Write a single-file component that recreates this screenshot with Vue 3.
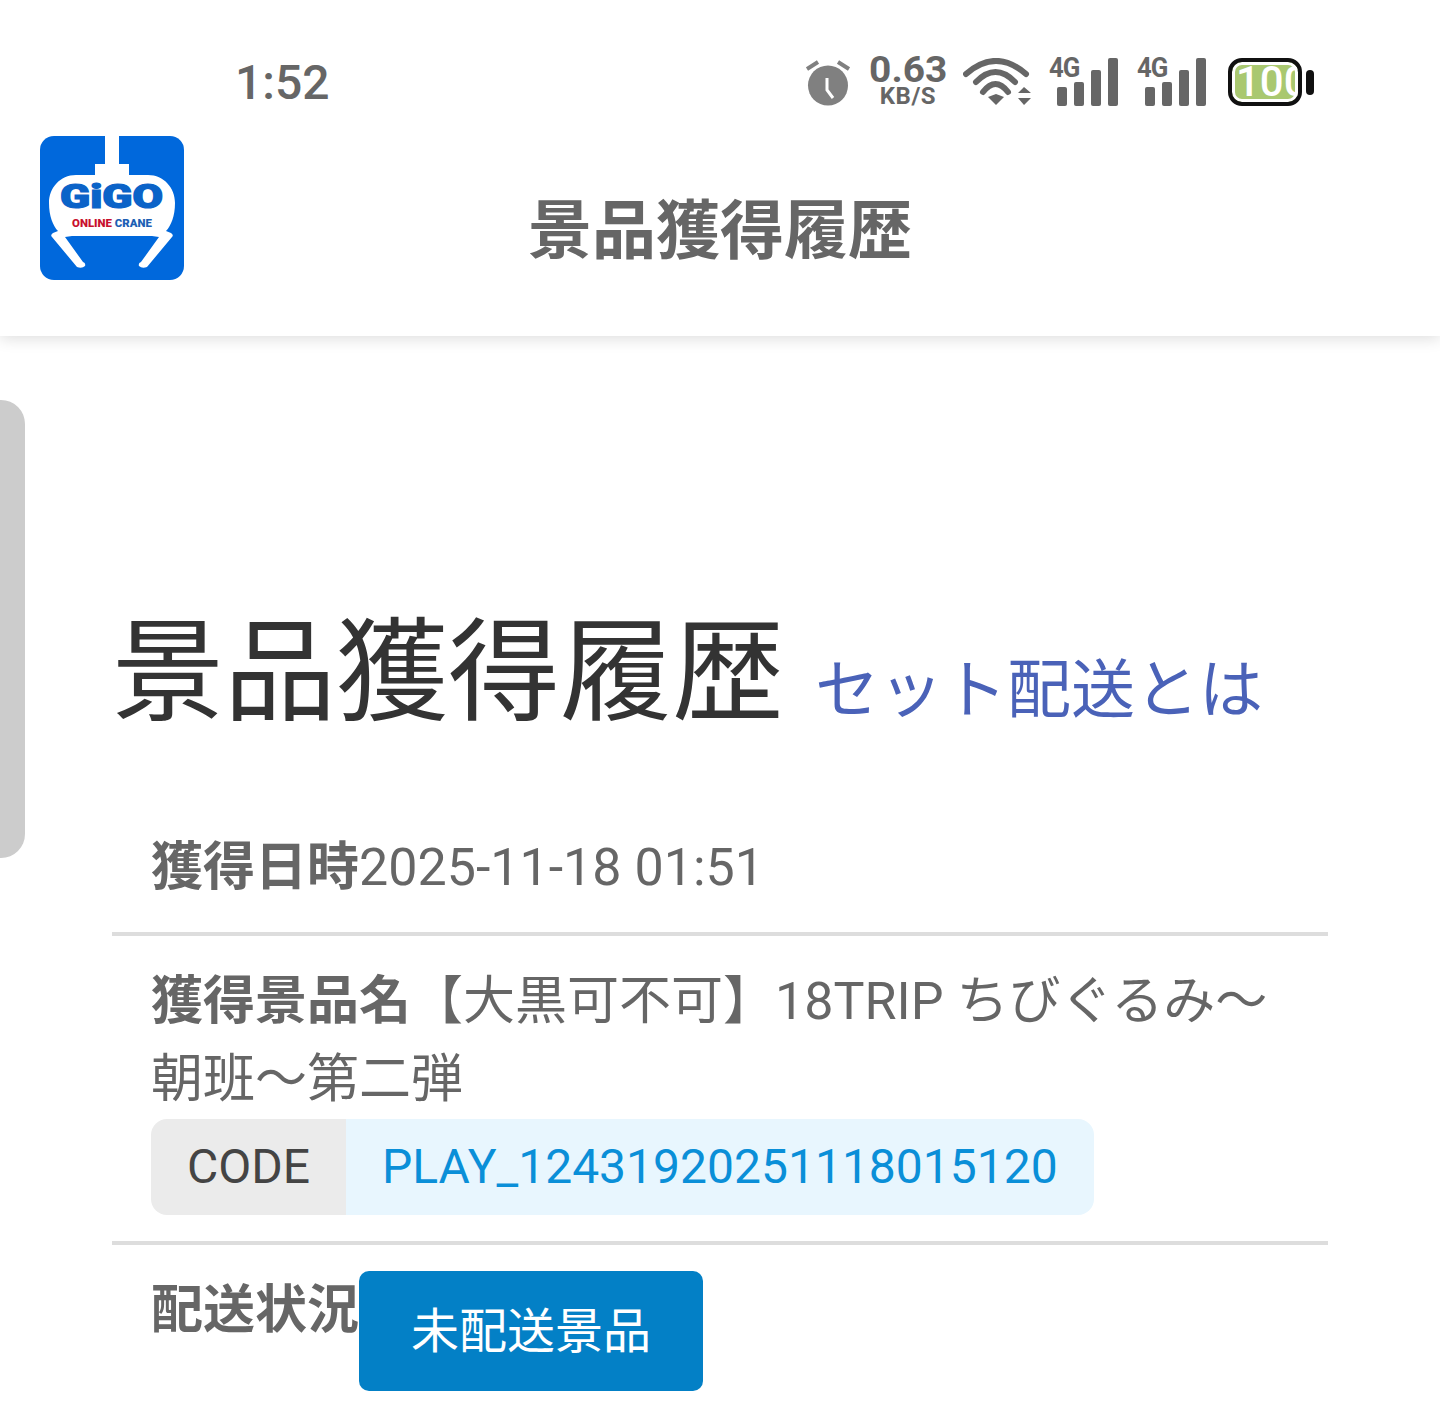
<template>
  <div class="page">
    <!-- status bar -->
    <div class="status">
      <div class="time">1:52</div>
      <div class="status-icons">
        <svg class="ic-alarm" viewBox="0 0 46 50" width="46" height="50">
          <circle cx="22" cy="28.5" r="20" fill="#808080" />
          <path d="M21 21V33L27 41" fill="none" stroke="#fff" stroke-width="3" />
          <path d="M1 12L12 5M32 5L43 12" stroke="#808080" stroke-width="4" fill="none" />
        </svg>
        <div class="speed">
          <span class="speed-num">0.63</span>
          <span class="speed-unit">KB/S</span>
        </div>
        <svg class="ic-wifi" viewBox="0 0 70 50" width="70" height="50">
          <path d="M3 16Q33 -10 63 16" fill="none" stroke="#666" stroke-width="6" stroke-linecap="round" />
          <path d="M13 24Q32.5 4 52 24" fill="none" stroke="#666" stroke-width="6" stroke-linecap="round" />
          <path d="M20 34Q32.5 18 45 34" fill="none" stroke="#666" stroke-width="6" stroke-linecap="round" />
          <path d="M25 39L33 36L41 39L33 47Z" fill="#666" />
          <path d="M55 35L61 29L68 35ZM55 40H68L61 47Z" fill="#666" />
        </svg>
        <div v-for="n in 2" :key="n" class="signal">
          <span class="sig-label">4G</span>
          <span class="bar" v-for="h in bars" :key="h" :style="{ height: h + 'px' }"></span>
        </div>
        <div class="battery">
          <div class="battery-body"><span class="battery-num">100</span></div>
          <div class="battery-tip"></div>
        </div>
      </div>
    </div>

    <!-- header -->
    <header class="head">
      <svg class="logo" viewBox="0 0 144 144" width="144" height="144">
        <rect width="144" height="144" rx="14" fill="#0068dc" />
        <path d="M65 0H79V28H89V39H108C124 39 135 52 135 67C135 80 131 90 126 95L131 97Q134 99 132 101L107 131Q102 133 99 130Q98 127 101 126L119 101L112 100H32L25 101L43 126Q46 127 45 130Q42 133 37 131L12 101Q10 99 13 97L18 95C13 90 9 80 9 67C9 52 20 39 36 39H55V28H65Z" fill="#fff" />
        <text x="20" y="72" class="logo-gigo" textLength="103" lengthAdjust="spacingAndGlyphs">GiGO</text>
        <text x="32" y="91" class="logo-small" textLength="80" lengthAdjust="spacingAndGlyphs"><tspan fill="#c8102e">ONLINE</tspan> <tspan fill="#1d5fb4">CRANE</tspan></text>
      </svg>
      <div class="head-title">景品獲得履歴</div>
    </header>

    <div class="side-tab"></div>

    <main class="content">
      <div class="title-row">
        <h1 class="title">景品獲得履歴</h1>
        <a class="link">セット配送とは</a>
      </div>

      <div class="row row-date">
        <span class="label">獲得日時</span><span class="val">2025-11-18 01:51</span>
      </div>

      <div class="row row-name">
        <div class="name-text"><span class="label">獲得景品名</span><span class="val">【大黒可不可】18TRIP ちびぐるみ〜朝班〜第二弾</span></div>
        <div class="code">
          <span class="code-key">CODE</span>
          <span class="code-val">PLAY_12431920251118015120</span>
        </div>
      </div>

      <div class="row-status">
        <span class="label">配送状況</span>
        <button class="status-btn">未配送景品</button>
      </div>
    </main>
  </div>
</template>

<script setup>
const bars = [19, 24, 36, 48]
</script>

<style>
html, body { margin: 0; background: #fff; }
</style>

<style scoped>
.page {
  width: 1440px;
  height: 1416px;
  overflow: hidden;
  position: relative;
  background: #fff;
  font-family: Roboto, "Noto Sans CJK JP", sans-serif;
}

/* status bar */
.status {
  height: 136px;
  box-sizing: border-box;
  padding: 52px 126px 0 235px;
  display: flex;
  justify-content: space-between;
  align-items: flex-start;
}
.time {
  font-size: 48px;
  font-weight: 500;
  line-height: 60px;
  margin-top: 1px;
  color: #666;
}
.status-icons {
  display: flex;
  align-items: flex-start;
}
.ic-alarm { margin: 5px 0 0 0; }
.speed {
  display: flex;
  flex-direction: column;
  align-items: center;
  margin: 2px 0 0 17px;
  width: 78px;
  color: #666;
  font-weight: 700;
}
.speed-num { font-size: 36px; line-height: 32px; transform: scaleX(1.08); }
.speed-unit { font-size: 24px; line-height: 20px; letter-spacing: 0.5px; }
.ic-wifi { margin: 6px 0 0 16px; }
.signal {
  display: flex;
  align-items: flex-end;
  gap: 7px;
  height: 48px;
  width: 68px;
  margin: 6px 0 0 17px;
  position: relative;
  justify-content: flex-end;
}
.signal + .signal { margin-left: 20px; }
.sig-label {
  position: absolute;
  left: -1px;
  top: -4px;
  font-size: 28px;
  font-weight: 700;
  color: #666;
  letter-spacing: -1px;
  line-height: 28px;
  transform: scaleX(0.92);
  transform-origin: left;
}
.bar { width: 10px; background: #666; border-radius: 2px; }
.battery {
  display: flex;
  align-items: center;
  gap: 4px;
  margin: 6px 0 0 22px;
}
.battery-body {
  width: 74px;
  height: 48px;
  box-sizing: border-box;
  border: 4px solid #111;
  border-radius: 14px;
  background: #a9c870;
  overflow: hidden;
  color: #fff;
  font-size: 42px;
  font-weight: 500;
  line-height: 40px;
  padding-left: 4px;
  box-shadow: inset 0 0 0 3px #fff;
  white-space: nowrap;
}
.battery-tip {
  width: 8px;
  height: 25px;
  background: #111;
  border-radius: 4px;
}

/* header */
.head {
  height: 200px;
  box-sizing: border-box;
  padding-left: 40px;
  position: relative;
  box-shadow: 0 3px 14px rgba(0, 0, 0, 0.13);
  clip-path: inset(0 0 -30px 0);
}
.logo { display: block; }
.logo-gigo { font: 900 33px Roboto, sans-serif; fill: #0b63c8; stroke: #0b63c8; stroke-width: 1.2; }
.logo-small { font: 900 10.5px Roboto, sans-serif; }
.head-title {
  position: absolute;
  left: 0;
  right: 0;
  top: 58px;
  text-align: center;
  font-size: 64px;
  font-weight: 700;
  line-height: 76px;
  color: #666;
}

.side-tab {
  position: absolute;
  left: 0;
  top: 400px;
  width: 25px;
  height: 458px;
  background: #ccc;
  border-radius: 0 24px 24px 0;
}

/* content */
.content {
  margin: 0 112px;
  padding-top: 274px;
}
.title-row {
  display: flex;
  align-items: baseline;
  gap: 31px;
}
.title {
  margin: 0;
  font-size: 112px;
  font-weight: 400;
  line-height: 128px;
  color: #333;
}
.link {
  font-size: 64px;
  color: #4a62b8;
}
.row {
  border-bottom: 4px solid #ddd;
  padding: 0 39px;
  font-size: 52px;
}
.label {
  font-size: 52px;
  font-weight: 700;
  color: #666;
}
.val {
  font-size: 52px;
  color: #666;
}
.row-date {
  margin-top: 66px;
  height: 128px;
  line-height: 128px;
}
.row-name {
  padding-top: 27px;
  padding-bottom: 26px;
}
.name-text { line-height: 78px; }
.code {
  display: flex;
  width: fit-content;
  height: 96px;
  border-radius: 16px;
  overflow: hidden;
  font-size: 48px;
  line-height: 96px;
}
.code-key {
  width: 195px;
  text-align: center;
  background: #ebebeb;
  color: #444;
}
.code-val {
  padding: 0 36px;
  background: #e8f6fe;
  color: #0a8fd8;
}
.row-status {
  display: flex;
  align-items: flex-start;
  padding: 26px 39px 0;
  font-size: 52px;
  line-height: 80px;
}
.status-btn {
  width: 344px;
  height: 120px;
  border: 0;
  border-radius: 10px;
  background: #0380c6;
  color: #fff;
  font-family: inherit;
  font-size: 48px;
  padding: 0 0 8px;
}
</style>
